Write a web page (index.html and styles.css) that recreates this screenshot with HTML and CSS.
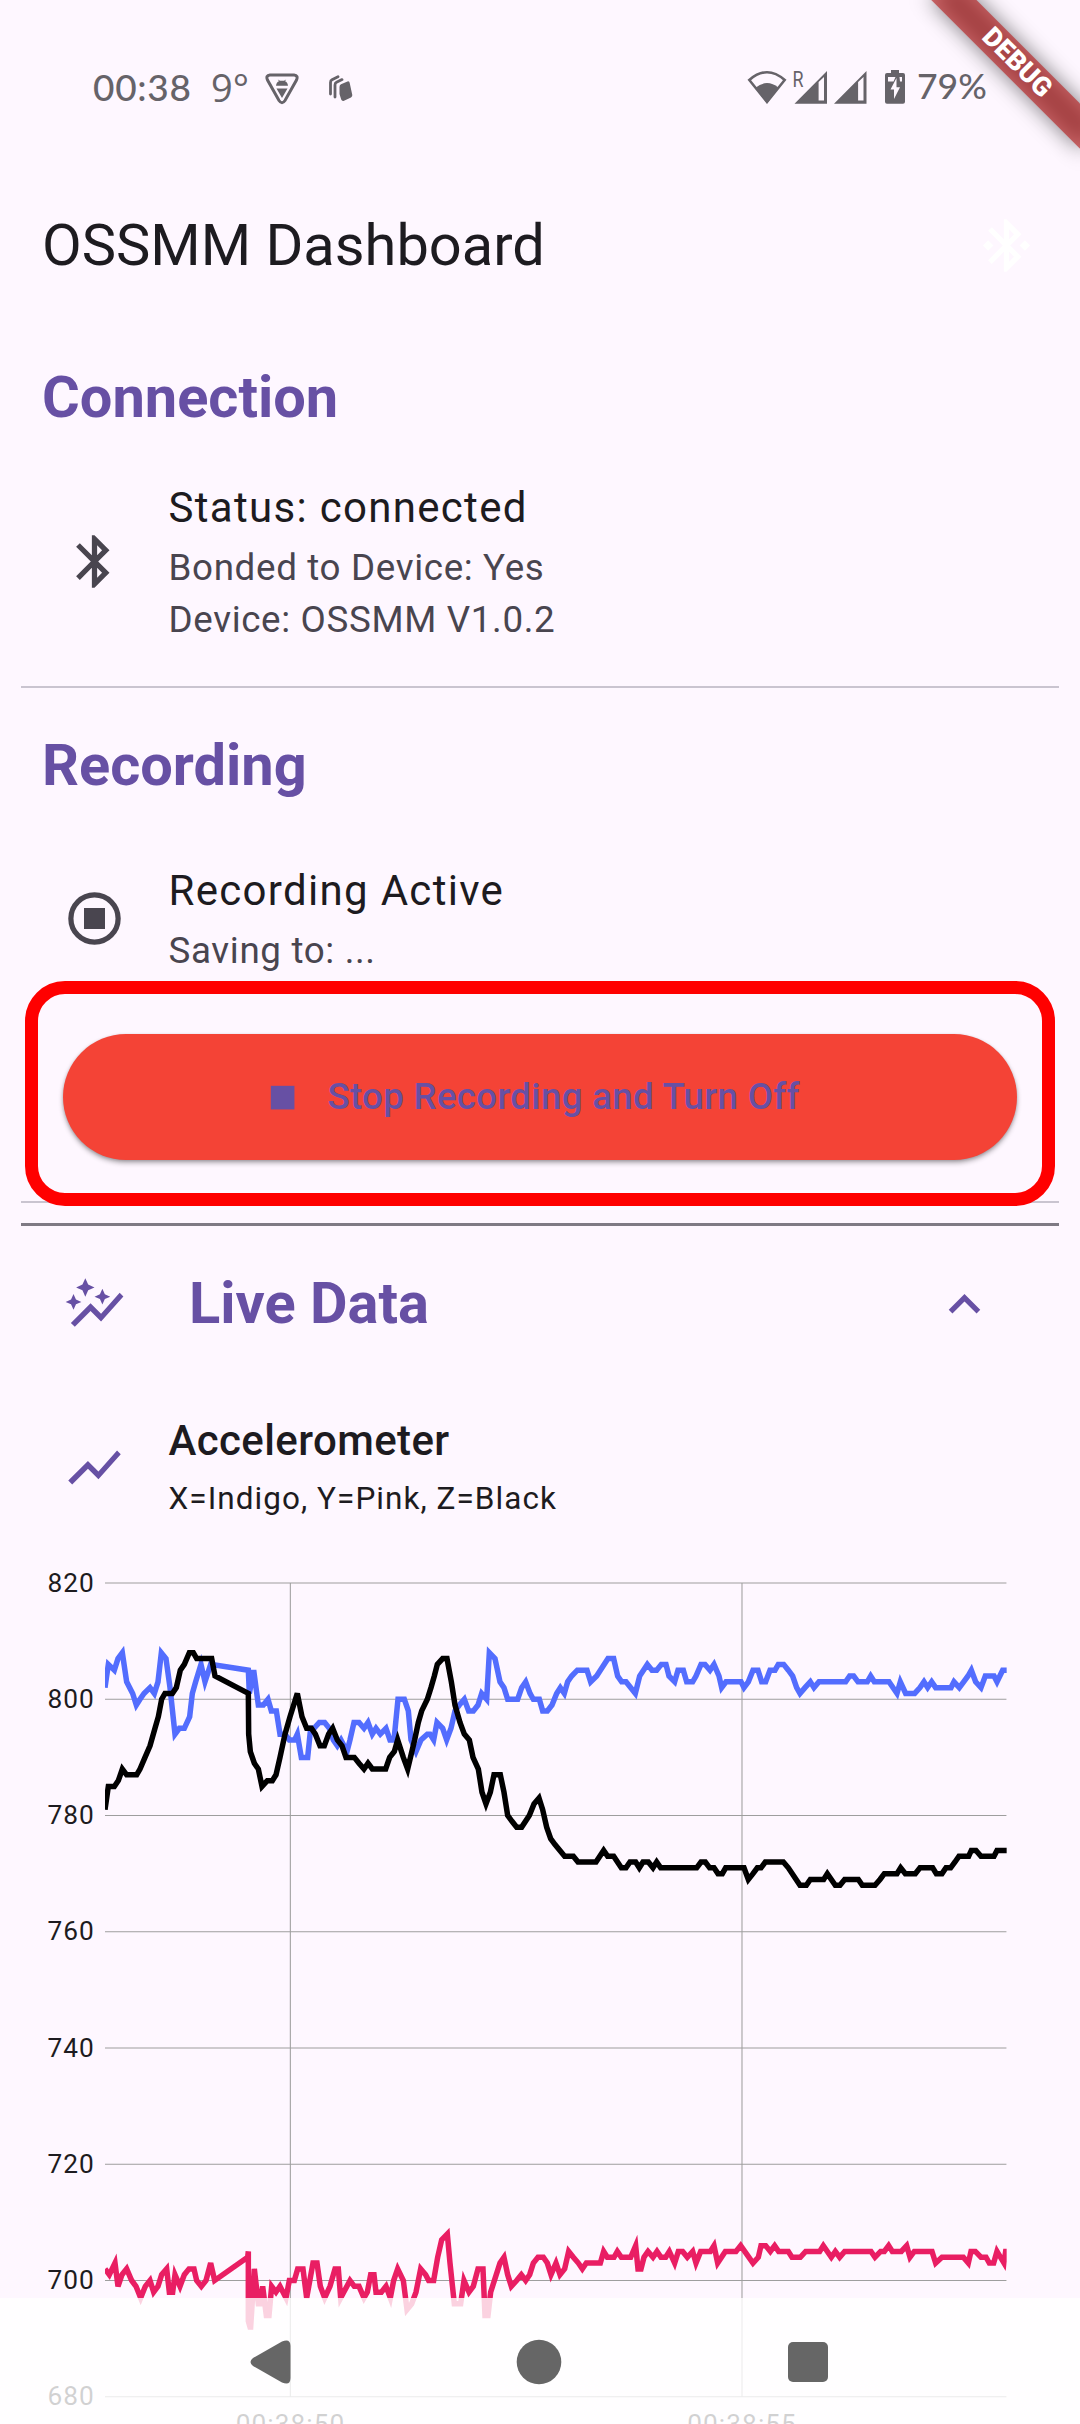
FILE: index.html
```html
<!DOCTYPE html>
<html lang="en">
<head>
<meta charset="utf-8">
<title>OSSMM Dashboard</title>
<link rel="stylesheet" href="styles.css">
</head>
<body>
<div class="screen">
  <header class="status-bar">
    <span class="clock">00:38</span>
    <span class="weather">9°</span>
    <svg class="shield" width="34" height="32" viewBox="0 0 34 32"><path d="M5 2H29Q33.500 2.500 31.500 7L20 27.500Q17 32 14 27.500L2.500 7Q.5 2.500 5 2Z" fill="none" stroke="#666369" stroke-width="3"/><path d="M11 12.800Q11.500 9 14 8.300L12.800 6.500 15 7.800H19L21.200 6.500 20 8.300Q22.500 9 23 12.800ZM11.500 15.500H22.500L17 25Z" fill="#666369"/></svg>
    <svg class="cards" width="24" height="27" viewBox="0 0 24 27"><path d="M1.500 19V7.500Q1.500 5.500 3 4.700L9 1.700M6 22V10Q6 8 7.500 7.300L13 4.600" fill="none" stroke="#666369" stroke-width="2.800" stroke-linecap="round"/><path d="M10.500 12Q10.500 10 12 9.300L18.500 6.400Q20.500 5.900 20.700 8L23.300 20Q23.500 21.500 22 22.400L15 25.800Q13 26.500 12.200 24.500L10.500 19Z" fill="#666369"/></svg>
    <span class="spacer"></span>
    <svg class="signals" width="82" height="36" viewBox="0 0 82 36"><path d="M2.300 11Q20 -4.500 37.700 11L20 33Z" fill="none" stroke="#666369" stroke-width="2.600"/><path d="M8.500 18.700Q20 9.500 31.500 18.700L20 34.500Z" fill="#666369"/><path fill-rule="evenodd" fill="#666369" d="M47.500 34.700H80V2ZM71.600 13V31.500H77V8Z"/><text x="45.500" y="18" font-size="22" textLength="11" lengthAdjust="spacingAndGlyphs" fill="#666369">R</text></svg>
    <svg class="signal-two" width="33" height="36" viewBox="0 0 33 36"><path fill-rule="evenodd" fill="#666369" d="M0 34.700H32.500V2ZM24.100 13V31.500H29.500V8Z"/></svg>
    <svg class="battery" width="20" height="36" viewBox="0 0 20 36"><path d="M6 1H14V4H18Q20 4 20 6V32.700Q20 34.700 18 34.700H2Q0 34.700 0 32.700V6Q0 4 2 4H6Z" fill="#666369"/><path d="M3 8H10.500L8.500 12.500H3ZM14.500 8H17V12.500H15ZM11.500 9 5.500 20.500H9V30L15 18.200H11.500Z" fill="#fef7ff"/></svg>
    <span class="percent">79%</span>
  </header>

  <div class="app-bar">
    <h1 class="title">OSSMM Dashboard</h1>
    <svg class="icon icon-light" viewBox="0 0 24 24"><path d="M7 12l-2-2-2 2 2 2 2-2zm10.710-4.290L12 2h-1v7.590L6.410 5 5 6.410 10.590 12 5 17.590 6.410 19 11 14.410V22h1l5.710-5.710-4.300-4.290 4.300-4.290zM13 5.830l1.880 1.880L13 9.590V5.830zm1.880 10.460L13 18.170v-3.760l1.880 1.880zM19 10l-2 2 2 2 2-2-2-2z"/></svg>
  </div>

  <section class="connection">
    <h2 class="heading">Connection</h2>
    <div class="tile">
      <svg class="icon icon-muted" viewBox="0 0 24 24"><path d="M17.710 7.710L12 2h-1v7.590L6.410 5 5 6.410 10.590 12 5 17.590 6.410 19 11 14.410V22h1l5.710-5.710-4.300-4.290 4.300-4.290zM13 5.830l1.880 1.880L13 9.590V5.830zm1.880 10.460L13 18.170v-3.760l1.880 1.880z"/></svg>
      <div class="tile-text">
        <p class="tile-title">Status: connected</p>
        <p class="tile-sub">Bonded to Device: Yes<br>Device: OSSMM V1.0.2</p>
      </div>
    </div>
  </section>

  <section class="recording">
    <h2 class="heading">Recording</h2>
    <div class="tile">
      <svg class="icon icon-muted" viewBox="0 0 24 24"><circle cx="12" cy="12" r="9" fill="none" stroke="#49454f" stroke-width="2"/><path d="M8 8h8v8H8z"/></svg>
      <div class="tile-text">
        <p class="tile-title">Recording Active</p>
        <p class="tile-sub">Saving to: ...</p>
      </div>
    </div>
    <button class="stop-button"><svg class="stop-icon" viewBox="0 0 24 24"><path d="M6 6h12v12H6z"/></svg><span>Stop Recording and Turn Off</span></button>
    <div class="callout"></div>
  </section>

  <section class="live">
    <div class="live-head">
      <svg class="icon icon-accent" viewBox="0 0 24 24"><path d="M14.060 9.940 12 9l2.060-.94L15 6l.94 2.060L18 9l-2.060.94L15 12l-.94-2.060zM4 14l.94-2.060L7 11l-2.060-.94L4 8l-.94 2.060L1 11l2.060.94L4 14zm4.500-5 1.090-2.410L12 5.500 9.590 4.410 8.500 2 7.410 4.410 5 5.500l2.410 1.090L8.500 9zm-4 11.500 6-6.010 4 4L23 8.930l-1.410-1.410-7.090 7.970-4-4L3 19l1.500 1.500z"/></svg>
      <h2 class="heading">Live Data</h2>
      <svg class="icon icon-accent" viewBox="0 0 24 24"><path d="M12 8l-6 6 1.410 1.410L12 10.830l4.590 4.580L18 14z"/></svg>
    </div>
    <div class="tile sensor">
      <svg class="icon icon-accent" viewBox="0 0 24 24"><path d="M3.500 18.490l6-6.010 4 4L22 6.920l-1.410-1.410-7.090 7.970-4-4L2 16.990z"/></svg>
      <div class="tile-text">
        <p class="sensor-name">Accelerometer</p>
        <p class="sensor-legend">X=Indigo, Y=Pink, Z=Black</p>
      </div>
    </div>
    <div class="chart">
      <div class="y-axis"><span>820</span><span>800</span><span>780</span><span>760</span><span>740</span><span>720</span><span>700</span><span>680</span></div>
      <div class="plot-column">
        <!-- x: elapsed position, y: distance below 820 -->
        <svg class="plot" viewBox="0 0 2705 140" preserveAspectRatio="none">
          <path class="grid" d="M0 0H2705M0 20H2705M0 40H2705M0 60H2705M0 80H2705M0 100H2705M0 120H2705M0 140H2705M556 0V140M1911 0V140"/>
          <polyline class="series pink" points="0,118 13,119 30,117 39,121 51,119 65,118 80,120 93,121 107,123 121,121 135,120 146,122 159,121 170,119 185,118 193,122 203,122 210,119 225,121 238,119 252,118 267,118 275,120 289,121 303,120 317,117 329,120 428,116 430,115 430,127 435,128 437,128 448,118 460,124 466,124 473,121 484,126 492,126 500,121 513,122 525,121 543,123 553,120 568,120 578,118 594,118 605,123 624,117 636,117 646,121 659,123 675,121 690,118 700,118 707,123 735,120 748,121 762,121 777,123 787,122 797,119 807,119 813,122 829,122 843,121 856,123 866,120 878,118 895,120 906,125 920,124 933,122 947,118 962,119 971,120 986,120 998,116 1010,113 1027,112 1035,117 1048,124 1067,124 1077,120 1092,122 1105,121 1119,118 1134,118 1140,126 1149,126 1157,122 1185,117 1197,116 1208,119 1219,121 1235,120 1249,119 1262,120 1274,119 1285,117 1299,116 1315,116 1327,117 1338,119 1353,117 1365,119 1379,118 1391,115 1405,116 1420,117 1432,118 1444,117 1486,117 1496,115 1507,116 1527,116 1537,115 1549,116 1577,116 1592,114 1599,118 1608,118 1617,116 1629,115 1644,116 1656,115 1668,116 1682,116 1693,115 1709,117 1720,115 1733,115 1747,116 1763,115 1773,117 1787,115 1816,115 1827,114 1838,117 1861,115 1893,115 1907,114 1944,117 1960,116 1968,114 1982,114 1996,115 2009,114 2021,115 2050,115 2061,116 2086,116 2102,115 2144,115 2155,114 2179,116 2191,115 2204,116 2219,115 2298,115 2310,116 2327,115 2338,115 2351,114 2362,115 2389,115 2405,114 2415,116 2428,115 2481,115 2492,117 2511,116 2575,116 2590,117 2598,115 2611,115 2628,116 2643,116 2653,117 2666,117 2676,115 2697,117 2702,115 2712,115"/>
          <polyline class="series indigo" points="0,18 10,14 28,15 39,13 52,12 65,17 83,19 94,21 105,20 117,19 135,18 148,19 159,17 169,12 183,13 195,18 210,26 223,25 238,25 254,23 262,19 272,17 288,14 300,17 317,14 430,15 433,19 446,15 460,21 475,21 489,20 499,22 514,22 525,26 540,26 553,27 569,27 577,26 589,30 608,30 617,25 627,25 643,24 659,24 673,25 685,27 697,28 708,27 726,29 735,27 747,24 762,24 777,25 789,24 802,26 813,25 826,26 843,25 855,27 867,27 879,20 898,20 910,22 918,27 933,29 948,27 967,26 975,26 986,27 996,24 1013,25 1025,27 1038,25 1050,22 1063,21 1078,20 1091,22 1105,22 1119,21 1130,19 1145,20 1153,12 1170,13 1185,17 1197,18 1208,20 1238,20 1250,18 1262,17 1275,19 1285,20 1303,20 1313,22 1327,22 1341,21 1355,19 1366,18 1378,19 1388,17 1400,16 1417,15 1446,15 1457,17 1475,16 1509,13 1526,13 1538,16 1550,17 1563,17 1591,19 1604,16 1627,14 1641,15 1655,15 1669,14 1683,14 1692,16 1709,17 1719,15 1735,15 1745,17 1763,17 1773,16 1788,14 1800,14 1815,15 1827,14 1842,16 1850,18 1863,17 1908,17 1917,18 1930,17 1944,15 1959,15 1970,17 1982,17 1995,15 2010,15 2020,14 2036,14 2050,15 2063,16 2075,18 2085,19 2100,18 2116,17 2127,18 2142,17 2222,17 2234,16 2246,16 2259,17 2287,17 2297,16 2308,17 2352,17 2376,19 2386,17 2402,19 2429,19 2445,18 2457,17 2468,18 2480,17 2492,18 2538,18 2547,17 2563,18 2576,17 2589,16 2599,15 2612,17 2628,18 2641,16 2667,16 2676,17 2693,15 2712,15"/>
          <polyline class="series black" points="0,39 10,35 28,35 40,34 52,32 65,33 95,33 105,32 120,30 135,28 150,25 160,23 170,20 180,19 202,19 214,18 226,15 238,14 253,12 265,12 275,13 320,13 330,16 430,19 431,26 436,29 448,31 460,32 471,35 487,34 502,34 513,33 525,30 540,26 555,23 577,19 591,23 605,25 619,25 631,26 645,28 658,28 671,26 683,25 697,27 711,28 723,30 748,30 762,31 777,32 789,31 802,32 842,32 854,30 868,29 878,27 895,30 908,32 929,27 940,24 950,22 967,20 978,18 988,16 997,14 1013,13 1026,13 1039,17 1050,21 1065,24 1078,26 1093,27 1104,30 1120,32 1131,36 1143,38 1156,36 1167,33 1186,33 1197,36 1208,40 1221,41 1235,42 1250,42 1273,40 1287,38 1302,37 1313,39 1325,42 1337,44 1350,45 1379,47 1405,47 1419,48 1473,48 1496,46 1508,47 1526,47 1549,49 1563,49 1575,48 1592,48 1603,49 1614,48 1630,48 1644,49 1655,48 1667,49 1775,49 1788,48 1801,48 1814,49 1827,49 1839,50 1852,50 1862,49 1917,49 1930,51 1944,50 1957,49 1968,49 1981,48 2035,48 2050,49 2085,52 2104,52 2116,51 2156,51 2167,50 2191,52 2205,52 2219,51 2260,51 2272,52 2310,52 2325,51 2338,50 2376,50 2387,49 2401,50 2431,50 2445,49 2483,49 2494,50 2511,50 2523,49 2537,49 2550,48 2562,47 2591,47 2599,46 2613,46 2628,47 2667,47 2676,46 2712,46"/>
        </svg>
        <div class="x-axis"><span>00:38:50</span><span>00:38:55</span></div>
      </div>
    </div>
  </section>

  <nav class="nav-bar">
    <svg width="41" height="46" viewBox="0 0 41 46"><path d="M3 19 32 2.500Q40.500-1 40.500 7V39Q40.500 47 32 43.500L3 27Q-2 23 3 19Z" fill="#666"/></svg>
    <svg width="46" height="46" viewBox="0 0 46 46"><circle cx="23" cy="23" r="22.300" fill="#666"/></svg>
    <svg width="40" height="46" viewBox="0 0 40 46"><rect y="3" width="40" height="40" rx="5" fill="#666"/></svg>
  </nav>
  <div class="debug-banner"><span>DEBUG</span></div>
</div>
</body>
</html>
```
FILE: styles.css
```css
* { box-sizing: border-box; margin: 0; padding: 0; }

body { background: #fef7ff; }

.screen {
  position: relative;
  width: 1080px;
  height: 2424px;
  overflow: hidden;
  background: #fef7ff;
  color: #1d1b20;
  font-family: Roboto, sans-serif;
}

svg { display: block; flex: none; }

/* System status bar */
.status-bar {
  display: flex;
  height: 172px;
  padding: 69px 93px 0 93px;
  color: #666369;
}
.clock { width: 99px; margin-top: -1px; font: 500 37px/37px Lato, sans-serif; letter-spacing: .7px; }
.weather { width: 73px; margin-top: -1px; padding-left: 19px; font: 500 38px/38px "Open Sans", sans-serif; white-space: nowrap; }
.shield { margin-top: 4px; }
.cards { margin: 6px 0 0 30px; }
.spacer { flex: 1; }
.signals { overflow: visible; }
.signal-two { margin-left: 5px; }
.battery { margin-left: 18px; }
.percent { width: 70px; margin: -1px 0 0 12px; font: 500 35.500px/36px Lato, sans-serif; white-space: nowrap; }

/* App bar */
.app-bar {
  display: flex;
  align-items: center;
  justify-content: space-between;
  height: 147px;
  padding: 0 42px;
}
.title { font-size: 57.750px; font-weight: 400; line-height: 73.500px; }

.icon { width: 63px; height: 63px; }
.icon-light { fill: #fff; }
.icon-muted { fill: #49454f; }
.icon-accent { fill: #6750a4; }

.heading { color: #6750a4; font-size: 57.750px; font-weight: 700; line-height: 73.500px; }

/* List tiles */
.tile { display: flex; align-items: center; gap: 42.500px; padding-left: 63px; }
.tile-title { font-size: 42px; line-height: 63px; letter-spacing: 1.310px; }
.tile-sub { margin-top: 3px; color: #49454f; font-size: 36.750px; line-height: 52.500px; letter-spacing: .656px; }

.connection {
  height: 369px;
  margin: 0 21px;
  padding-top: 42px;
  border-bottom: 2.600px solid #cac4d0;
}
.connection .heading, .recording .heading { margin-left: 21px; }
.connection .tile, .recording .tile { margin: 41px 0 0 -21px; }

.recording {
  position: relative;
  height: 515px;
  margin: 0 21px;
  padding-top: 41px;
  border-bottom: 2.600px solid #cac4d0;
}
.recording .tile { margin-top: 56px; }
.recording .tile .icon { margin-top: 2px; }
.stop-button {
  display: flex;
  align-items: center;
  justify-content: center;
  gap: 21px;
  width: 954px;
  height: 126px;
  margin: 57px 42px 0;
  padding: 1px 21px 0 0;
  border: 0;
  border-radius: 63px;
  background: #f44336;
  box-shadow: 0 3px 5px rgba(0, 0, 0, .3), 0 1px 3px rgba(0, 0, 0, .15);
  color: #6750a4;
  font: 500 36.750px/52.500px Roboto, sans-serif;
  letter-spacing: .263px;
}
.stop-icon { width: 47.250px; height: 47.250px; fill: #6750a4; }
.callout {
  position: absolute;
  left: 4px;
  top: 293px;
  width: 1030px;
  height: 225px;
  border: 13px solid #f00;
  border-radius: 40px;
}

/* Live data */
.live { margin: 20px 21px 0; border-top: 3px solid #7f7a84; }
.live-head {
  display: flex;
  align-items: center;
  height: 156px;
  padding: 0 63px 0 42px;
}
.live-head .heading { flex: 1; margin-left: 63px; }
.sensor { margin: 27px 0 0 -21px; }
.sensor .icon { margin-top: 6px; }
.sensor-name { font-size: 42px; font-weight: 500; line-height: 63px; letter-spacing: .390px; }
.sensor-legend { margin-top: 6px; font-size: 31.500px; line-height: 42px; letter-spacing: 1.050px; }

.chart { display: flex; margin-top: 47.500px; }
.y-axis {
  display: flex;
  flex-direction: column;
  width: 84px;
  padding-left: 26.500px;
  font-size: 26.250px;
  letter-spacing: 1.050px;
}
.y-axis span { height: 116.250px; line-height: 31px; }
.plot-column { width: 902px; padding-top: 15px; }
.plot { width: 901.667px; height: 813.750px; overflow: visible; clip-path: inset(-3px 0); }
.plot path, .plot polyline { fill: none; vector-effect: non-scaling-stroke; }
.grid { stroke: #9e9e9e; stroke-width: 1.050px; }
.series { stroke-width: 5.500px; stroke-linejoin: miter; }
.indigo { stroke: #536dfe; }
.pink { stroke: #e91e63; }
.black { stroke: #000; }
.x-axis {
  display: flex;
  gap: 341.600px;
  margin: 12.500px 0 0 130.500px;
  font-size: 26.250px;
  line-height: 31px;
  letter-spacing: 1.050px;
}
.x-axis span { width: 110px; text-align: center; white-space: nowrap; }

/* System navigation over the scrolled content */
.nav-bar {
  position: absolute;
  left: 0;
  right: 0;
  bottom: 0;
  display: flex;
  justify-content: space-between;
  height: 126px;
  padding: 40.600px 252.300px 0 250px;
  background: rgba(255, 255, 255, .8);
}

/* Corner ribbon */
.debug-banner {
  position: absolute;
  left: 911.900px;
  top: 47.350px;
  width: 210px;
  height: 31.500px;
  transform: rotate(45deg);
  color: #fff;
  font-size: 26.800px;
  font-weight: 900;
  line-height: 31.500px;
  text-align: center;
}
.debug-banner::before, .debug-banner::after {
  content: "";
  position: absolute;
  inset: 0;
}
.debug-banner::before { background: rgba(0, 0, 0, .5); filter: blur(10.400px); }
.debug-banner::after { background: rgba(183, 28, 28, .63); }
.debug-banner span { position: relative; z-index: 1; }
```
